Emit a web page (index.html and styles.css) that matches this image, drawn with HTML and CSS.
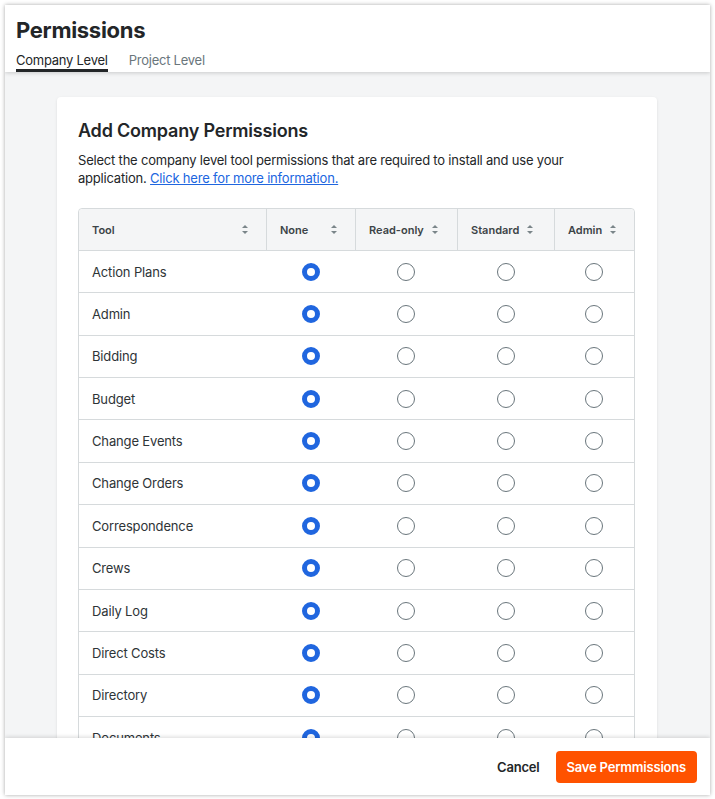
FILE: index.html
```html
<!DOCTYPE html>
<html>
<head>
<meta charset="utf-8">
<link rel="stylesheet" href="styles.css">
</head>
<body>
<div class="window">
  <header class="top">
    <h1 class="title">Permissions</h1>
    <nav class="tabs">
      <span class="tab active">Company Level</span>
      <span class="tab">Project Level</span>
    </nav>
  </header>
  <main class="content">
    <section class="card">
      <h2 class="card-title">Add Company Permissions</h2>
      <p class="desc">Select the company level tool permissions that are required to install and use your application. <a class="link" href="#">Click here for more information.</a></p>
      <div class="table">
        <div class="row head">
          <div class="cell th first"><span>Tool</span><span class="sort"></span></div>
          <div class="cell th"><span>None</span><span class="sort"></span></div>
          <div class="cell th"><span>Read-only</span><span class="sort"></span></div>
          <div class="cell th"><span>Standard</span><span class="sort"></span></div>
          <div class="cell th"><span>Admin</span><span class="sort"></span></div>
        </div>
        <div class="row"><div class="cell name">Action Plans</div><div class="cell c"><span class="radio on"></span></div><div class="cell c"><span class="radio"></span></div><div class="cell c"><span class="radio"></span></div><div class="cell c"><span class="radio"></span></div></div>
        <div class="row"><div class="cell name">Admin</div><div class="cell c"><span class="radio on"></span></div><div class="cell c"><span class="radio"></span></div><div class="cell c"><span class="radio"></span></div><div class="cell c"><span class="radio"></span></div></div>
        <div class="row"><div class="cell name">Bidding</div><div class="cell c"><span class="radio on"></span></div><div class="cell c"><span class="radio"></span></div><div class="cell c"><span class="radio"></span></div><div class="cell c"><span class="radio"></span></div></div>
        <div class="row"><div class="cell name">Budget</div><div class="cell c"><span class="radio on"></span></div><div class="cell c"><span class="radio"></span></div><div class="cell c"><span class="radio"></span></div><div class="cell c"><span class="radio"></span></div></div>
        <div class="row"><div class="cell name">Change Events</div><div class="cell c"><span class="radio on"></span></div><div class="cell c"><span class="radio"></span></div><div class="cell c"><span class="radio"></span></div><div class="cell c"><span class="radio"></span></div></div>
        <div class="row"><div class="cell name">Change Orders</div><div class="cell c"><span class="radio on"></span></div><div class="cell c"><span class="radio"></span></div><div class="cell c"><span class="radio"></span></div><div class="cell c"><span class="radio"></span></div></div>
        <div class="row"><div class="cell name">Correspondence</div><div class="cell c"><span class="radio on"></span></div><div class="cell c"><span class="radio"></span></div><div class="cell c"><span class="radio"></span></div><div class="cell c"><span class="radio"></span></div></div>
        <div class="row"><div class="cell name">Crews</div><div class="cell c"><span class="radio on"></span></div><div class="cell c"><span class="radio"></span></div><div class="cell c"><span class="radio"></span></div><div class="cell c"><span class="radio"></span></div></div>
        <div class="row"><div class="cell name">Daily Log</div><div class="cell c"><span class="radio on"></span></div><div class="cell c"><span class="radio"></span></div><div class="cell c"><span class="radio"></span></div><div class="cell c"><span class="radio"></span></div></div>
        <div class="row"><div class="cell name">Direct Costs</div><div class="cell c"><span class="radio on"></span></div><div class="cell c"><span class="radio"></span></div><div class="cell c"><span class="radio"></span></div><div class="cell c"><span class="radio"></span></div></div>
        <div class="row"><div class="cell name">Directory</div><div class="cell c"><span class="radio on"></span></div><div class="cell c"><span class="radio"></span></div><div class="cell c"><span class="radio"></span></div><div class="cell c"><span class="radio"></span></div></div>
        <div class="row"><div class="cell name">Documents</div><div class="cell c"><span class="radio on"></span></div><div class="cell c"><span class="radio"></span></div><div class="cell c"><span class="radio"></span></div><div class="cell c"><span class="radio"></span></div></div>
        <div class="row"><div class="cell name">Drawings</div><div class="cell c"><span class="radio on"></span></div><div class="cell c"><span class="radio"></span></div><div class="cell c"><span class="radio"></span></div><div class="cell c"><span class="radio"></span></div></div>
      </div>
    </section>
  </main>
  <footer class="footer">
    <button class="btn-cancel">Cancel</button>
    <button class="btn-save">Save Permmissions</button>
  </footer>
</div>
</body>
</html>
```

FILE: styles.css
```css
* { box-sizing: border-box; }
html, body { margin: 0; padding: 0; background: #ffffff; }
body {
  padding: 5px 5px 4px 5px;
  font-family: Inter, "Noto Sans", sans-serif;
  color: #232628;
  height: 799px;
}
.window {
  height: 790px;
  display: flex;
  flex-direction: column;
  background: #f4f5f6;
  box-shadow: 0 0 4px rgba(0,0,0,0.35);
  overflow: hidden;
}
.top {
  position: relative;
  z-index: 2;
  background: #fff;
  padding: 11px 11px 0 11px;
  box-shadow: 0 1px 4px rgba(0,0,0,0.18);
  flex: none;
}
.title {
  margin: 0;
  font-size: 22px;
  font-weight: 700;
  line-height: 28px;
  color: #232628;
  letter-spacing: -0.3px;
}
.tabs {
  display: flex;
  gap: 21px;
  margin-top: 9px;
}
.tab {
  font-size: 13px;
  line-height: 15px;
  color: #6a767c;
  padding-bottom: 1px;
  border-bottom: 3px solid transparent;
  letter-spacing: -0.25px;
}
.tab.active {
  color: #232628;
  border-bottom-color: #232628;
}
.content {
  flex: 1;
  overflow: hidden;
  padding: 25px 53px 0 52px;
}
.card {
  background: #fff;
  border-radius: 4px;
  box-shadow: 0 1px 3px rgba(0,0,0,0.1);
  padding: 22px 22px 0 21px;
}
.card-title {
  margin: 0;
  font-size: 18px;
  font-weight: 600;
  line-height: 24px;
  color: #232628;
  letter-spacing: -0.2px;
}
.desc {
  margin: 8px 0 0 0;
  font-size: 13px;
  line-height: 18px;
  color: #232628;
  letter-spacing: -0.2px;
}
.link { color: #2066df; text-decoration: underline; }
.table {
  margin-top: 21px;
  border: 1px solid #d6dadc;
  border-radius: 4px 4px 0 0;
}
.row {
  display: grid;
  grid-template-columns: 187px 89px 102px 97px 80px;
  height: 42.36px;
  border-bottom: 1px solid #d6dadc;
}
.row.head {
  height: 42px;
  background: #f4f5f6;
  border-radius: 4px 4px 0 0;
}
.cell {
  display: flex;
  align-items: center;
  font-size: 13px;
  color: #2e3437;
  letter-spacing: -0.15px;
}
.th {
  font-size: 11px;
  font-weight: 600;
  color: #3c4447;
  padding-left: 13px;
  padding-right: 17px;
  gap: 8px;
  border-left: 1px solid #d6dadc;
  letter-spacing: 0;
}
.th.first { border-left: none; justify-content: space-between; padding-right: 17px; }
.th:nth-child(2) { justify-content: space-between; }
.sort {
  width: 7px;
  height: 9px;
  position: relative;
  flex: none;
}
.sort::before, .sort::after {
  content: "";
  position: absolute;
  left: 0;
  border-left: 3.5px solid transparent;
  border-right: 3.5px solid transparent;
}
.sort::before { top: 0; border-bottom: 3.5px solid #7a8589; }
.sort::after { bottom: 0; border-top: 3.5px solid #7a8589; }
.name { padding-left: 13px; }
.c { justify-content: center; }
.radio {
  width: 18px;
  height: 18px;
  border-radius: 50%;
  border: 1.5px solid #6a767c;
  background: #fff;
}
.radio.on {
  border: 5.5px solid #2066df;
}
.footer {
  position: relative;
  z-index: 2;
  flex: none;
  height: 57px;
  background: #fff;
  box-shadow: 0 -1px 4px rgba(0,0,0,0.15);
  display: flex;
  align-items: center;
  justify-content: flex-end;
  padding: 0 13px 0 0;
}
.btn-cancel {
  font-family: inherit;
  font-size: 13px;
  font-weight: 600;
  color: #232628;
  background: none;
  border: none;
  padding: 0 16px;
  height: 32px;
  letter-spacing: -0.2px;
}
.btn-save {
  font-family: inherit;
  font-size: 13px;
  font-weight: 600;
  color: #fff;
  background: #ff5200;
  border: none;
  border-radius: 4px;
  height: 32px;
  padding: 0 11px;
  white-space: nowrap;
  letter-spacing: -0.2px;
}
```
